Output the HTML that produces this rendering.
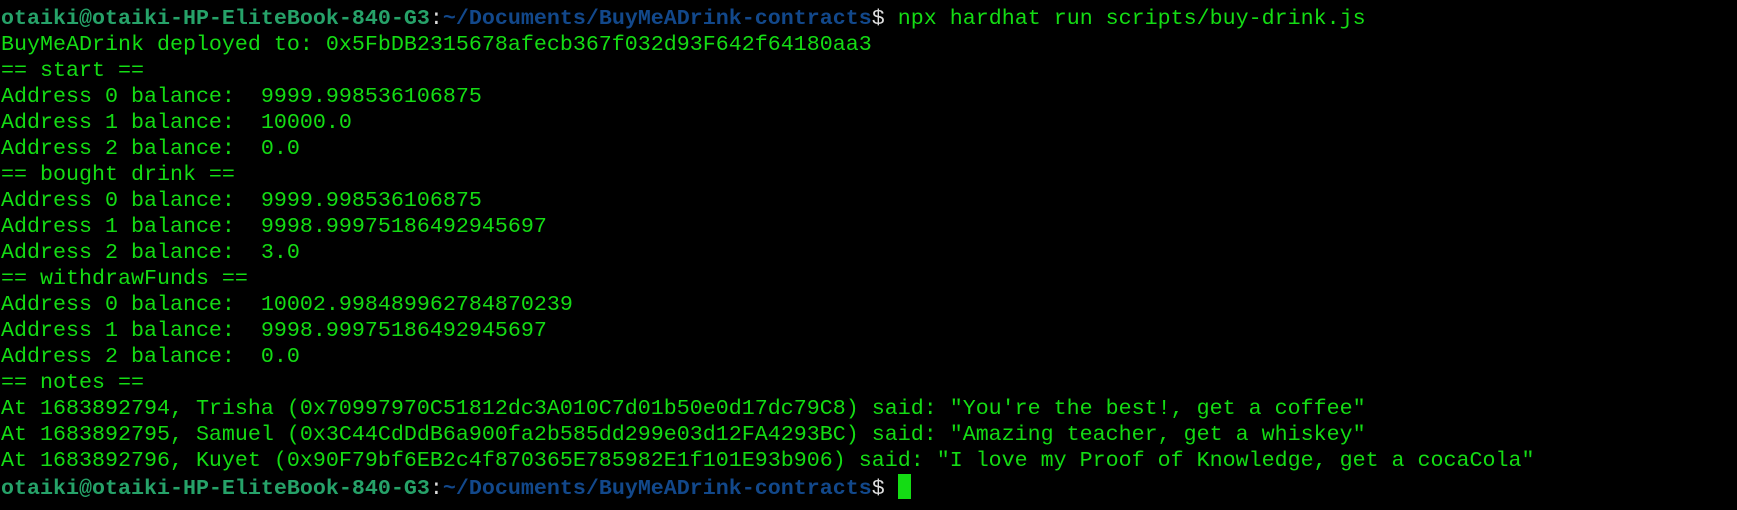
<!DOCTYPE html>
<html><head><style>
html,body{margin:0;padding:0;background:#000;width:1737px;height:510px;overflow:hidden}
pre{margin:0;position:absolute;left:1px;top:6px;font-family:"Liberation Mono",monospace;font-size:21.66px;line-height:26px;color:#14dc14;white-space:pre}
.u{color:#26a269;font-weight:bold}
.p{color:#12488b;font-weight:bold}
.c{background:#14dc14;display:inline-block;width:13px;height:25px;vertical-align:-5px}
</style></head><body>
<pre><span class="u">otaiki@otaiki-HP-EliteBook-840-G3</span><span style="color:#ddd">:</span><span class="p">~/Documents/BuyMeADrink-contracts</span><span style="color:#ddd">$</span> npx hardhat run scripts/buy-drink.js
BuyMeADrink deployed to: 0x5FbDB2315678afecb367f032d93F642f64180aa3
== start ==
Address 0 balance:  9999.998536106875
Address 1 balance:  10000.0
Address 2 balance:  0.0
== bought drink ==
Address 0 balance:  9999.998536106875
Address 1 balance:  9998.99975186492945697
Address 2 balance:  3.0
== withdrawFunds ==
Address 0 balance:  10002.998489962784870239
Address 1 balance:  9998.99975186492945697
Address 2 balance:  0.0
== notes ==
At 1683892794, Trisha (0x70997970C51812dc3A010C7d01b50e0d17dc79C8) said: "You're the best!, get a coffee"
At 1683892795, Samuel (0x3C44CdDdB6a900fa2b585dd299e03d12FA4293BC) said: "Amazing teacher, get a whiskey"
At 1683892796, Kuyet (0x90F79bf6EB2c4f870365E785982E1f101E93b906) said: "I love my Proof of Knowledge, get a cocaCola"
<span class="u">otaiki@otaiki-HP-EliteBook-840-G3</span><span style="color:#ddd">:</span><span class="p">~/Documents/BuyMeADrink-contracts</span><span style="color:#ddd">$</span> <span class="c"></span></pre>
</body></html>
